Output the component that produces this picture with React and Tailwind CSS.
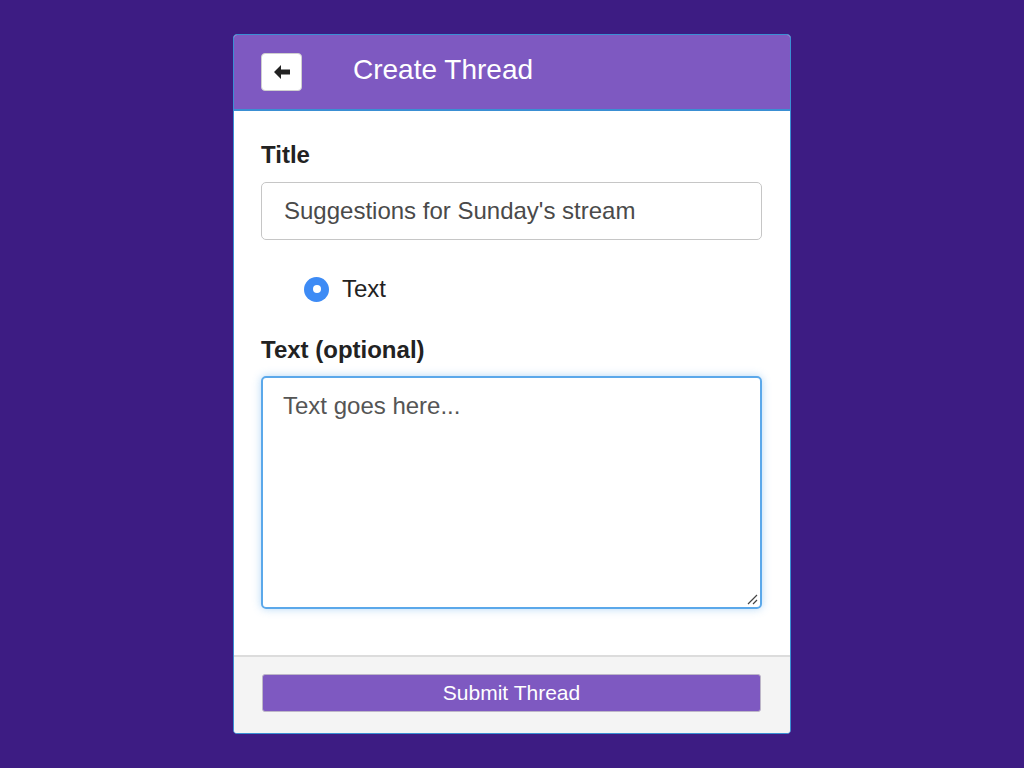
export default function App() {
  return (
    <div
      className="min-h-screen w-full bg-[#3d1c83] pt-[34px]"
      style={{ fontFamily: '"Liberation Sans", Arial, sans-serif' }}
    >
      <div className="mx-auto flex h-[700px] w-[558px] flex-col overflow-hidden rounded-[4px] border border-[#3a8fd3] bg-white">
        {/* header */}
        <div className="flex h-[76px] shrink-0 items-center border-b-2 border-[#3a8fd3] bg-[#7e59c1] pl-[27px]">
          <button className="flex h-[38px] w-[41px] items-center justify-center rounded-[4px] border border-[#cfcfcf] bg-white">
            <svg width="18" height="16" viewBox="0 0 18 16">
              <path d="M8 1 L1 8 L8 15 L8 10.5 L17 10.5 L17 5.5 L8 5.5 Z" fill="#222" />
            </svg>
          </button>
          <h1 className="-mt-[4px] ml-[51px] text-[28px] leading-none text-white">Create Thread</h1>
        </div>

        {/* body */}
        <div className="flex flex-1 flex-col pl-[27px] pr-[28px] pt-[30px]">
          <label className="text-[24px] font-bold leading-[28px] text-[#222]">Title</label>
          <div className="mt-[13px] flex h-[58px] items-center rounded-[5px] border border-[#c6c6c6] px-[22px] text-[24px] text-[#4a4a4a]">
            Suggestions for Sunday's stream
          </div>

          <div className="ml-[43px] mt-[35px] flex items-center gap-[13px]">
            <span className="flex h-[25px] w-[25px] items-center justify-center rounded-full bg-[#3d8bf5]">
              <span className="h-[8px] w-[8px] rounded-full bg-white" />
            </span>
            <span className="text-[24px] leading-[28px] text-[#222]">Text</span>
          </div>

          <label className="mt-[33px] text-[24px] font-bold leading-[28px] text-[#222]">
            Text (optional)
          </label>
          <div className="relative mt-[12px] h-[233px] rounded-[5px] border-2 border-[#5ba8ea] px-[20px] pt-[14px] text-[24px] leading-[28px] text-[#555] shadow-[0_0_8px_rgba(91,168,234,0.45)]">
            Text goes here...
            <svg className="absolute bottom-[2px] right-[2px]" width="12" height="12" viewBox="0 0 12 12">
              <path d="M11 2 L2 11 M11 7 L7 11" stroke="#444" strokeWidth="1.2" />
            </svg>
          </div>
        </div>

        {/* footer */}
        <div className="flex h-[78px] shrink-0 flex-col border-t-2 border-[#dcdcdc] bg-[#f4f4f4] pl-[28px] pr-[29px] pt-[17px]">
          <button className="flex h-[38px] w-full items-center justify-center rounded-[3px] border border-[#bdb6c8] bg-[#7e59c1] text-[21px] text-white">
            Submit Thread
          </button>
        </div>
      </div>
    </div>
  );
}
